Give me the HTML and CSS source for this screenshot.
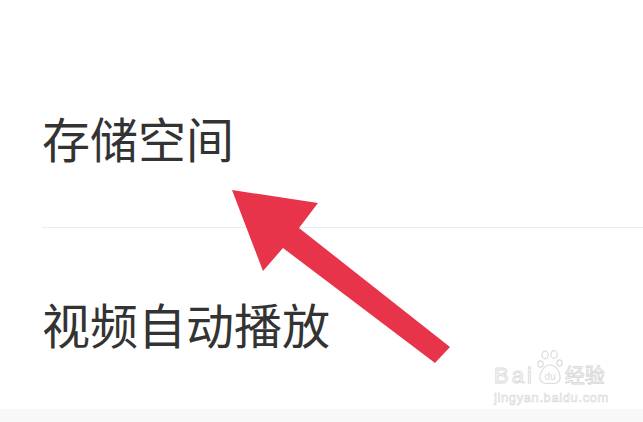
FILE: index.html
```html
<!DOCTYPE html>
<html lang="zh">
<head>
    <meta charset="UTF-8">
    <title>设置</title>
    <link rel="stylesheet" href="styles.css">
</head>
<body>
    <div class="page">
        <div class="list">
            <div class="item first">存储空间</div>
            <div class="item">视频自动播放</div>
        </div>
        <div class="bottom"></div>

        <svg class="arrow" width="643" height="422" viewBox="0 0 643 422">
            <polygon points="232,190 318,203 299,228 450,347 435,363 283,248 263,271" fill="#e8344a"/>
        </svg>

        <div class="mark">
            <div class="mark-top">
                <span class="bai">Bai</span>
                <svg class="paw" width="26" height="36" viewBox="0 0 26 36">
                    <g fill="none" stroke="#dcdcdc" stroke-width="1.2">
                        <ellipse cx="8" cy="5" rx="3.2" ry="3.8"/>
                        <ellipse cx="17" cy="4.5" rx="3.2" ry="3.8"/>
                        <ellipse cx="3.5" cy="14" rx="2.6" ry="3.2"/>
                        <ellipse cx="22.5" cy="13" rx="2.6" ry="3.2"/>
                        <path d="M13 15 C7 15 2 23 3 29 C4 34 10 34 13 33 C16 34 22 34 23 29 C24 23 19 15 13 15 Z"/>
                    </g>
                    <text x="13" y="30" text-anchor="middle" font-family="Liberation Sans, sans-serif" font-size="10" fill="#dcdcdc">du</text>
                </svg>
                <span class="jy">经验</span>
            </div>
            <div class="url">jingyan.baidu.com</div>
        </div>
    </div>
</body>
</html>
```

FILE: styles.css
```css
body {
    margin: 0;
    background-color: #ffffff;
    font-family: "Noto Sans CJK SC", "Noto Sans", sans-serif;
    color: #333333;
}
.page {
    position: relative;
    width: 643px;
    height: 422px;
    overflow: hidden;
}
.list {
    height: 409px;
    padding-left: 42px;
}
.item {
    font-size: 48px;
    line-height: 68px;
}
.first {
    padding-top: 103px;
    padding-bottom: 56px;
    border-bottom: 1px solid #ececec;
}
.item + .item {
    padding-top: 61px;
}
.bottom {
    height: 13px;
    background-color: #f8f8f8;
}
.arrow {
    position: absolute;
    left: 0;
    top: 0;
}
.mark {
    position: absolute;
    left: 494px;
    top: 350px;
}
.mark-top {
    display: flex;
    align-items: flex-end;
    gap: 2px;
}
.bai {
    font-family: "Liberation Sans", sans-serif;
    font-size: 22px;
    line-height: 20px;
    letter-spacing: 3px;
    color: #ffffff;
    -webkit-text-stroke: 1px #dcdcdc;
}
.jy {
    font-size: 20px;
    line-height: 22px;
    color: #ffffff;
    -webkit-text-stroke: 0.8px #d6d6d6;
}
.url {
    font-family: "Liberation Sans", sans-serif;
    font-size: 13px;
    letter-spacing: 0.6px;
    margin-top: 4px;
    color: #ffffff;
    -webkit-text-stroke: 0.6px #d8d8d8;
}
```
